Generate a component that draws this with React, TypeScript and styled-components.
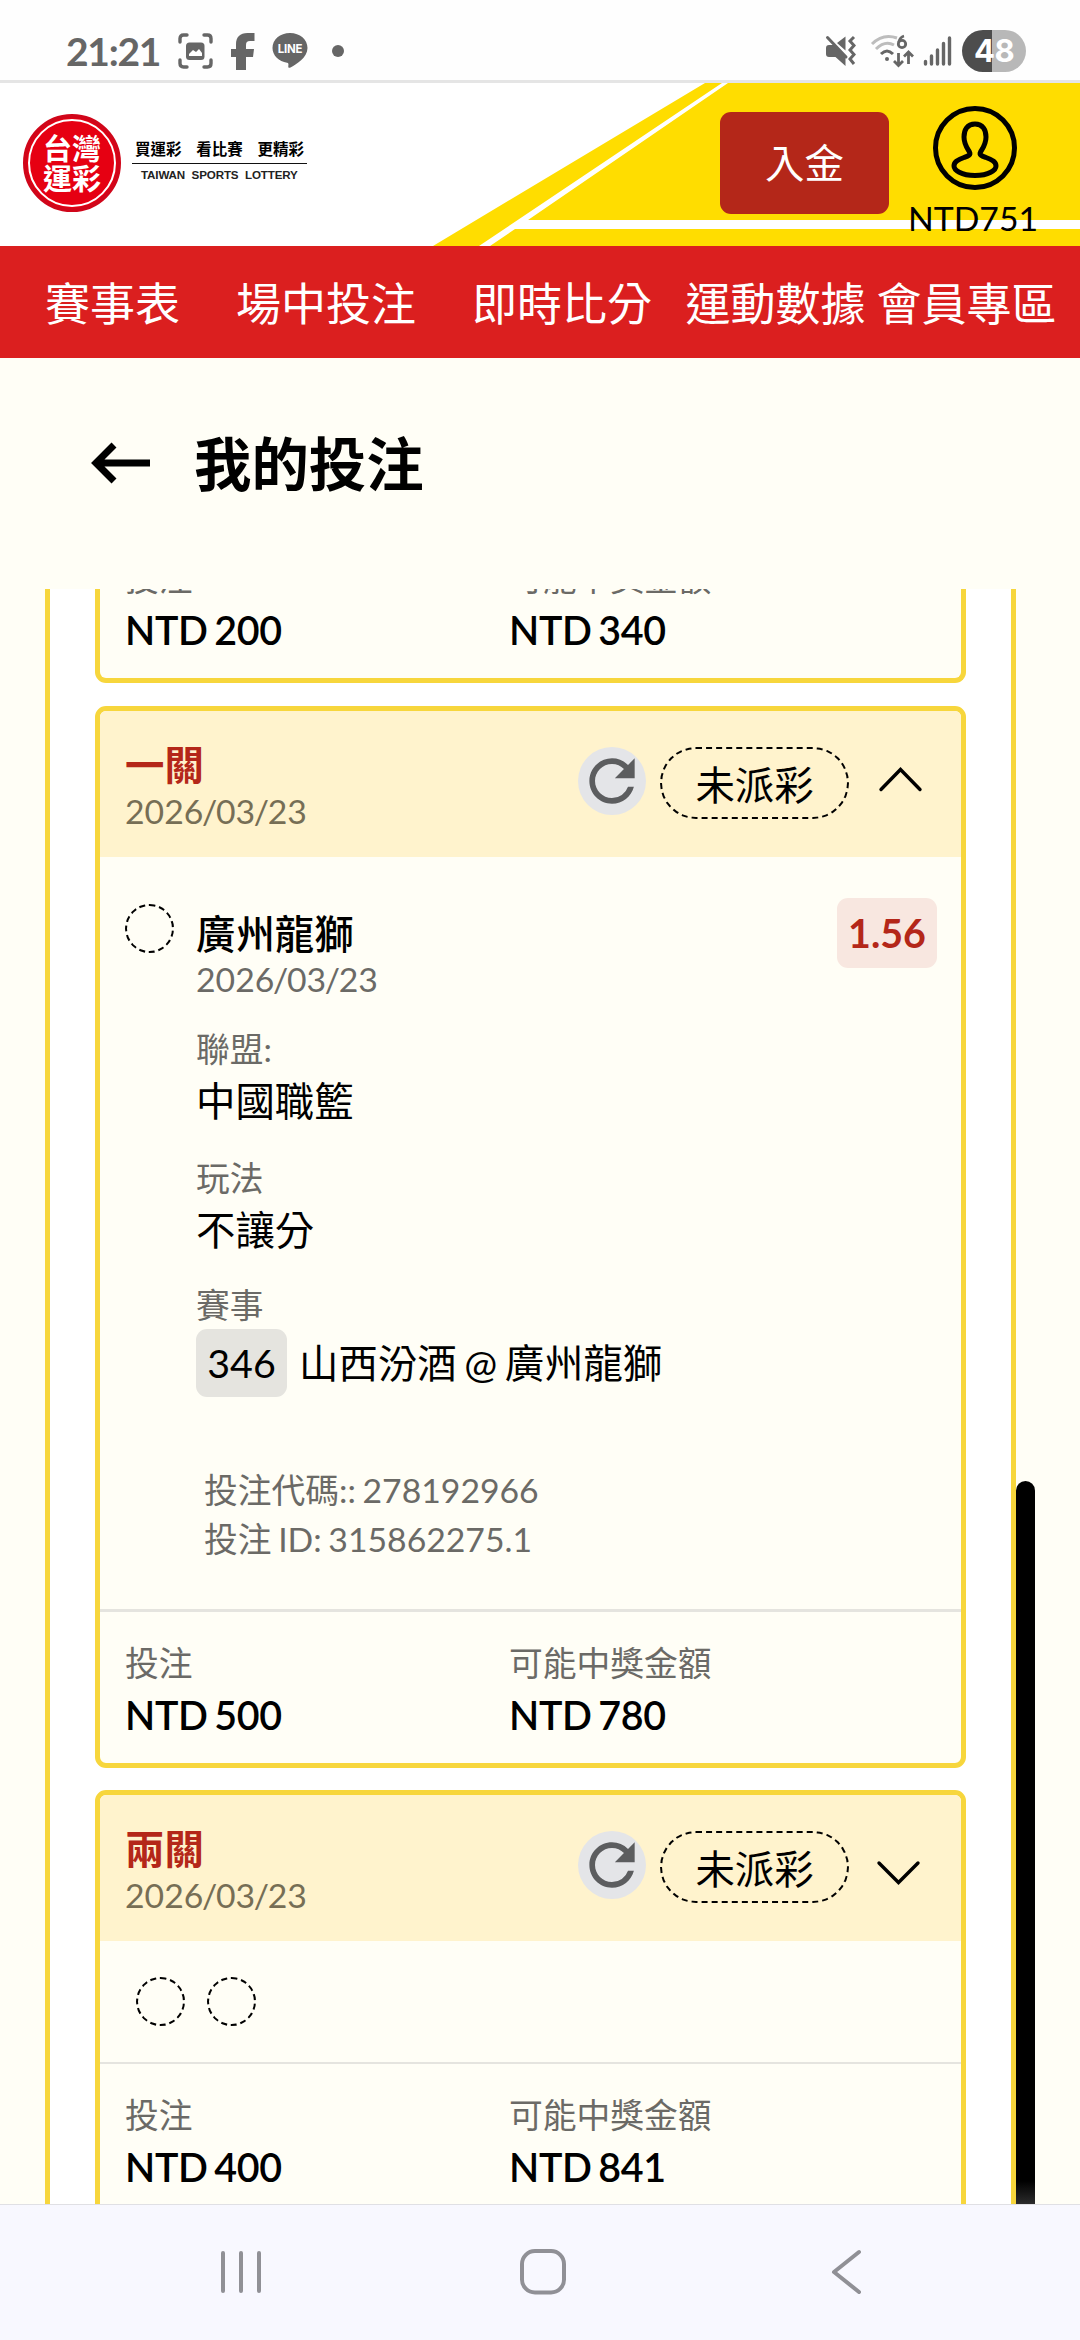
import React from "react";
import styled, { createGlobalStyle, css } from "styled-components";

const GlobalStyle = createGlobalStyle`
  * { box-sizing: border-box; }
  body {
    margin: 0;
    background: #fffef6;
    font-family: Lato, "Noto Sans CJK TC", sans-serif;
    color: #000;
  }
`;

const Screen = styled.div`
  width: 1080px;
  height: 2340px;
  overflow: hidden;
  display: flex;
  flex-direction: column;
  background: #fffef6;
`;

/* ---------- status bar ---------- */
const StatusBar = styled.div`
  height: 83px;
  flex: none;
  display: flex;
  justify-content: space-between;
  align-items: flex-start;
  padding: 22px 54px 0 66px;
  background: #fefefe;
  border-bottom: 3px solid #e5e5e5;
`;

const StatusGroup = styled.div<{ $gap: number }>`
  display: flex;
  align-items: center;
  height: 58px;
  gap: ${(p) => p.$gap}px;
`;

const Clock = styled.span`
  width: 112px;
  font-family: Lato, sans-serif;
  font-weight: 700;
  font-size: 39px;
  line-height: 57px;
  letter-spacing: -1.3px;
  color: #666;
  white-space: nowrap;
`;

const FacebookIcon = styled.svg`
  margin-left: 18px;
`;

const LineBubble = styled.span`
  display: grid;
  place-items: center;
  margin-left: 17px;
  > * { grid-area: 1 / 1; }
`;

const LineWord = styled.span`
  font: 700 11.5px/12px Inter, sans-serif;
  color: #fff;
  margin-top: -4px;
  letter-spacing: -0.3px;
`;

const Dot = styled.span`
  width: 12px;
  height: 12px;
  border-radius: 50%;
  background: #666;
  margin-left: 24px;
`;

const WifiIcon = styled.svg`
  margin-left: 5px;
`;

const Battery = styled.span`
  width: 64px;
  height: 42px;
  border-radius: 21px;
  margin-left: 1px;
  background: linear-gradient(90deg, #4d4d4d 30px, #b8b8b8 30px);
  color: #fff;
  font: 700 31px/42px Inter, sans-serif;
  letter-spacing: -0.5px;
  text-align: center;
`;

/* ---------- header ---------- */
const Header = styled.header`
  height: 163px;
  flex: none;
  display: grid;
  background: #fff;
  > * { grid-area: 1 / 1; }
`;

const HeaderContent = styled.div`
  z-index: 1;
  display: flex;
  align-items: flex-start;
`;

const Seal = styled.div`
  width: 98px;
  height: 98px;
  margin: 31px 0 0 23px;
  border-radius: 50%;
  background: #e60012;
  border: 4px solid #d0061a;
  padding: 1px;
`;

const SealRing = styled.div`
  width: 88px;
  height: 88px;
  border: 2px solid #fff;
  border-radius: 50%;
  display: flex;
  flex-direction: column;
  align-items: center;
  padding-top: 13px;
  color: #fff;
  font-weight: 700;
  font-size: 29px;
  line-height: 29.5px;
`;

const Tagline = styled.div`
  width: 175px;
  margin: 58px 0 0 11px;
  display: flex;
  flex-direction: column;
`;

const Slogan = styled.div`
  display: flex;
  justify-content: space-between;
  padding: 0 3px 0 3px;
  height: 23px;
  border-bottom: 1.5px solid #111;
  font-weight: 700;
  font-size: 15.5px;
  line-height: 16px;
`;

const SloganEn = styled.div`
  padding: 4px 0 0 9px;
  font: 700 11.6px/14px "Liberation Sans", Arial, sans-serif;
  word-spacing: 3.5px;
  letter-spacing: -0.14px;
  color: #222;
  white-space: nowrap;
`;

const Deposit = styled.button`
  width: 169px;
  height: 102px;
  margin: 29px 0 0 413px;
  padding: 0;
  border: 0;
  border-radius: 11px;
  background: #b42719;
  color: #fff;
  font: 400 39.4px/100px Lato, "Noto Sans CJK TC", sans-serif;
`;

const Account = styled.div`
  width: 150px;
  margin: 23px 0 0 9px;
  display: flex;
  flex-direction: column;
  align-items: center;
  font-size: 33.75px;
  line-height: 40px;
  gap: 8px;
  > svg { margin-left: 4px; }
`;

const Nav = styled.nav`
  height: 112px;
  flex: none;
  display: flex;
  background: #db1f1f;
  color: #fff;
  font-size: 45px;
  line-height: 117px;
  padding-left: 45px;
`;

const NavItem = styled.a<{ $gap?: number }>`
  margin-right: ${(p) => p.$gap ?? 0}px;
  white-space: nowrap;
`;

/* ---------- page title ---------- */
const TitleRow = styled.div`
  height: 231px;
  flex: none;
  display: flex;
  align-items: flex-start;
  padding: 83px 0 0 90px;
`;

const Title = styled.h1`
  margin: -17px 0 0 42px;
  font-size: 57.4px;
  line-height: 80px;
  font-weight: 700;
`;

/* ---------- bet list ---------- */
const Viewport = styled.main`
  height: 1615px;
  flex: none;
  overflow: hidden;
  display: flex;
  padding-left: 45px;
`;

const List = styled.section`
  width: 971px;
  height: 1800px;
  flex: none;
  display: flex;
  flex-direction: column;
  gap: 22.5px;
  padding: 0 45px;
  background: #fff;
  border: solid #f7d63c;
  border-width: 0 5px;
`;

const Track = styled.div`
  width: 19px;
  padding-top: 892px;
`;

const Thumb = styled.div`
  height: 723px;
  border-radius: 10px 10px 0 0;
  background: linear-gradient(#000 700px, #2c2c2c 723px);
`;

const Card = styled.article<{ $h: number; $open?: boolean }>`
  height: ${(p) => p.$h}px;
  flex: none;
  display: flex;
  flex-direction: column;
  overflow: hidden;
  background: #fffef6;
  border: 5px solid #f7d63c;
  border-radius: 11px;
  ${(p) => p.$open && css`
    border-top: 0;
    border-top-left-radius: 0;
    border-top-right-radius: 0;
    justify-content: flex-end;
  `}
`;

const CardHead = styled.div`
  height: 146px;
  flex: none;
  display: flex;
  background: #fff3cd;
  padding: 0 36px 0 25px;
`;

const HeadText = styled.div`
  flex: 1;
  padding-top: 29px;
`;

const Legs = styled.div`
  color: #b42719;
  font-weight: 700;
  font-size: 39.4px;
  line-height: 50px;
`;

const DateText = styled.div<{ $tone?: string }>`
  font-size: 33.75px;
  line-height: 43px;
  color: ${(p) => p.$tone ?? "#6b6a66"};
`;

const Slash = styled.span`
  margin: 0 -1.35px;
`;

const Refresh = styled.button`
  width: 68px;
  height: 68px;
  margin: 36px 14px 0 0;
  padding: 0;
  border: 0;
  border-radius: 50%;
  background: #e4e5e8;
  display: grid;
  place-items: center;
`;

const Pill = styled.span`
  width: 189px;
  height: 72px;
  margin: 36px 28px 0 0;
  border: 2px dashed #000;
  border-radius: 36px;
  font-size: 39.4px;
  line-height: 71px;
  text-align: center;
`;

const Toggle = styled.span<{ $up?: boolean }>`
  width: 48px;
  padding-top: ${(p) => (p.$up ? 53 : 63)}px;
  margin-left: ${(p) => (p.$up ? 0 : -2)}px;
  margin-right: ${(p) => (p.$up ? 0 : 2)}px;
`;

const Ring = styled.span`
  width: 49px;
  height: 49px;
  flex: none;
  border: 2px dashed #000;
  border-radius: 50%;
`;

const Body = styled.div`
  flex: 1;
  display: flex;
  padding: 0 24px 0 25px;
  > ${Ring} { margin-top: 47px; }
`;

const Detail = styled.div`
  flex: 1;
  display: flex;
  flex-direction: column;
  padding: 52px 0 0 22px;
`;

const Team = styled.div`
  font-weight: 500;
  font-size: 39.4px;
  line-height: 49px;
`;

const Label = styled.div<{ $mt?: number; $lh?: number }>`
  font-size: 33.75px;
  line-height: ${(p) => p.$lh ?? 48}px;
  margin-top: ${(p) => p.$mt ?? 0}px;
  color: #6b6a66;
  word-spacing: -2px;
`;

const Value = styled.div`
  font-size: 39.4px;
  line-height: 56px;
`;

const Match = styled.div`
  display: flex;
  align-items: center;
  gap: 12px;
  font-size: 39.4px;
  line-height: 68px;
  white-space: nowrap;
  word-spacing: -2.5px;
`;

const MatchNo = styled.span`
  width: 91px;
  height: 68px;
  border-radius: 11px;
  background: #e5e4df;
  text-align: center;
  line-height: 67px;
`;

const Codes = styled.div`
  margin: 69.5px 0 0 8px;
`;

const Odds = styled.span`
  width: 100px;
  height: 70px;
  margin-top: 41px;
  border-radius: 11px;
  background: #f8e7e0;
  color: #b42719;
  font-weight: 700;
  font-size: 39.4px;
  line-height: 69px;
  text-align: center;
`;

const Rings = styled.div`
  height: 121px;
  flex: none;
  display: flex;
  gap: 22px;
  padding: 36px 0 0 36px;
`;

const Totals = styled.div<{ $line: number }>`
  flex: none;
  height: 154px;
  display: grid;
  grid-template-columns: 384px 1fr;
  align-content: start;
  padding: 27px 0 0 25px;
  border-top: ${(p) => p.$line}px solid #e5e4df;
`;

const Money = styled.div`
  font-weight: 600;
  font-size: 39.4px;
  line-height: 50px;
  margin-top: 3px;
  letter-spacing: -0.3px;
  word-spacing: -3px;
`;

/* ---------- system navigation ---------- */
const SystemNav = styled.div`
  flex: 1;
  display: flex;
  align-items: flex-start;
  padding: 42px 0 0 218px;
  background: #f8f8ff;
  border-top: 1px solid #e0e0e4;
`;

const HomeSlot = styled.span`
  display: flex;
  margin: 0 263px 0 256px;
`;

const stake = "投注";
const payout = "可能中獎金額";

function BetDate({ tone }: { tone?: string }) {
  return <DateText $tone={tone}>2026<Slash>/</Slash>03<Slash>/</Slash>23</DateText>;
}

function BetTotals({ bet, win, line = 3 }: { bet: number; win: number; line?: number }) {
  return (
    <Totals $line={line}>
      <div><Label>{stake}</Label><Money>NTD {bet}</Money></div>
      <div><Label>{payout}</Label><Money>NTD {win}</Money></div>
    </Totals>
  );
}

function BetHead({ legs, open }: { legs: string; open?: boolean }) {
  return (
    <CardHead>
      <HeadText>
        <Legs>{legs}</Legs>
        <BetDate tone="#766e55" />
      </HeadText>
      <Refresh aria-label="refresh">
        <svg width="68" height="68" viewBox="0 0 24 24" fill="#5c5d5f">
          <path d="M17.65 6.35A7.958 7.958 0 0 0 12 4c-4.42 0-7.99 3.58-7.99 8s3.57 8 7.99 8c3.73 0 6.84-2.55 7.73-6h-2.08A5.99 5.99 0 0 1 12 18c-3.31 0-6-2.69-6-6s2.69-6 6-6c1.66 0 3.14.69 4.22 1.78L13 11h7V4l-2.35 2.35z" />
        </svg>
      </Refresh>
      <Pill>未派彩</Pill>
      <Toggle $up={open}>
        <svg width="48" height="30" viewBox="0 0 48 30" fill="none" stroke="#000" strokeWidth="3.4" strokeLinecap="round">
          {open ? <path d="M4 25.5L23.5 5.500L43 25.5" /> : <path d="M4 5L23.500 24.500L43 5" />}
        </svg>
      </Toggle>
    </CardHead>
  );
}

export default function App() {
  return (
    <Screen>
      <GlobalStyle />
      <StatusBar>
        <StatusGroup $gap={0}>
          <Clock>21:21</Clock>
          <svg width="35" height="36" viewBox="0 0 35 36" fill="none" stroke="#666" strokeWidth="3.4" strokeLinecap="round">
            <path d="M2 9V5.500Q2 2 5.500 2H9M26 2H29.500Q33 2 33 5.500V9M33 27V30.500Q33 34 29.500 34H26M9 34H5.500Q2 34 2 30.500V27" />
            <rect x="8" y="9.500" width="18.500" height="17.500" rx="3.500" fill="#666" stroke="none" />
            <path d="M11 23v-2l4-4 3 2 3-3 3 4v3z" fill="#fff" stroke="none" />
          </svg>
          <FacebookIcon width="24" height="37" viewBox="0 0 24 37" fill="#666">
            <path d="M5 37V24H0V16H5V11.500C5 4 9 0 16.500 0H23.500V8H19C16 8 15 9.300 15 12V16H23L22 24H15V37Z" />
          </FacebookIcon>
          <LineBubble>
            <svg width="36" height="36" viewBox="0 0 36 36" fill="#666">
              <path d="M18 0C8 0 .5 6.500 .5 15c0 7.500 6.500 13.500 14.500 14.700 1.600.3 1.600 1.200 1.300 3.300-.2 1.800.5 2.300 2.200 1.400C24 31.500 35.500 25 35.500 15 35.500 6.500 28 0 18 0z" />
            </svg>
            <LineWord>LINE</LineWord>
          </LineBubble>
          <Dot />
        </StatusGroup>
        <StatusGroup $gap={9}>
          <svg width="31" height="32" viewBox="0 0 31 32" fill="#666">
            <path d="M1 13q0-3 3-3h5L20.500 21.500V31L10.500 22H4q-3 0-3-3zM12 8l8.500-6.500V15.500z" />
            <path d="M2.500 2.500L21 22" stroke="#666" strokeWidth="3" strokeLinecap="round" />
            <path d="M29 2l-4 4 4 4.500-4 4.500 4 4.500-4 4.500 4 5" fill="none" stroke="#666" strokeWidth="3" />
          </svg>
          <WifiIcon width="44" height="34" viewBox="0 0 44 34" fill="none">
            <path d="M2 10Q13-1 27 4" stroke="#bdbdbd" strokeWidth="3" />
            <path d="M6 15Q15 6 24 11" stroke="#bdbdbd" strokeWidth="3" />
            <path d="M11 20Q17 14 23 20" stroke="#666" strokeWidth="3" />
            <circle cx="17" cy="25" r="2" fill="#666" />
            <circle cx="32" cy="10" r="3.700" stroke="#666" strokeWidth="2.800" />
            <path d="M28.500 8.500Q30 3 34 2M28.500 19v12M24 27l4.500 4.500L33 27M38.500 30V18M34 22.500l4.500-4.500 4.500 4.500" stroke="#666" strokeWidth="2.800" />
          </WifiIcon>
          <svg width="29" height="32" viewBox="0 0 29 32" stroke="#666" strokeWidth="3.4" strokeLinecap="round">
            <path d="M2.500 26.500V29M8.500 21V29M14.500 15V29M20.500 8.500V29M26.500 3V29" />
          </svg>
          <Battery>48</Battery>
        </StatusGroup>
      </StatusBar>

      <Header>
        <svg width="1080" height="163" viewBox="0 83 1080 163" fill="#ffdd00">
          <path d="M705 83H722L479 246H433ZM728 83H1080V220H528ZM515 229H1080V246H490Z" />
        </svg>
        <HeaderContent>
          <Seal>
            <SealRing><span>台灣</span><span>運彩</span></SealRing>
          </Seal>
          <Tagline>
            <Slogan><span>買運彩</span><span>看比賽</span><span>更精彩</span></Slogan>
            <SloganEn>TAIWAN SPORTS LOTTERY</SloganEn>
          </Tagline>
          <Deposit>入金</Deposit>
          <Account>
            <svg width="84" height="84" viewBox="0 0 84 84" fill="none" stroke="#000" strokeWidth="5">
              <circle cx="42" cy="42" r="39.500" />
              <path d="M42 18C34 18 31 24 31 31C31 38 33.500 41 36.500 46C38 49 35 50 31 51.500C24 54 21 56 21 60C21 64 28 69.500 42 69.500C56 69.500 63 64 63 60C63 56 60 54 53 51.500C49 50 46 49 47.500 46C50.500 41 53 38 53 31C53 24 50 18 42 18Z" strokeLinejoin="round" />
            </svg>
            <span>NTD751</span>
          </Account>
        </HeaderContent>
      </Header>

      <Nav>
        <NavItem $gap={56}>賽事表</NavItem>
        <NavItem $gap={56}>場中投注</NavItem>
        <NavItem $gap={33.5}>即時比分</NavItem>
        <NavItem $gap={11}>運動數據</NavItem>
        <NavItem>會員專區</NavItem>
      </Nav>

      <TitleRow>
        <svg width="62" height="44" viewBox="0 0 62 44" fill="none" stroke="#000" strokeWidth="7">
          <path d="M60 22H6M24 4L6 22L24 40" />
        </svg>
        <Title>我的投注</Title>
      </TitleRow>

      <Viewport>
        <List>
          <Card $h={94} $open>
            <BetTotals bet={200} win={340} />
          </Card>

          <Card $h={1062}>
            <BetHead legs="一關" open />
            <Body>
              <Ring />
              <Detail>
                <Team>廣州龍獅</Team>
                <BetDate />
                <Label $mt={24}>聯盟:</Label>
                <Value>中國職籃</Value>
                <Label $mt={25}>玩法</Label>
                <Value>不讓分</Value>
                <Label $mt={24} $lh={47}>賽事</Label>
                <Match><MatchNo>346</MatchNo><span>山西汾酒 @ 廣州龍獅</span></Match>
                <Codes>
                  <Label $lh={48.7}>投注代碼:: 278192966</Label>
                  <Label $lh={48.7}>投注 ID: 315862275.1</Label>
                </Codes>
              </Detail>
              <Odds>1.56</Odds>
            </Body>
            <BetTotals bet={500} win={780} />
          </Card>

          <Card $h={440}>
            <BetHead legs="兩關" />
            <Rings><Ring /><Ring /></Rings>
            <BetTotals bet={400} win={841} line={2} />
          </Card>
        </List>
        <Track><Thumb /></Track>
      </Viewport>

      <SystemNav>
        <svg width="46" height="50" viewBox="0 0 46 50" stroke="#909096" strokeWidth="4" strokeLinecap="round">
          <path d="M5 6V44M23 6V44M41 6V44" />
        </svg>
        <HomeSlot>
          <svg width="46" height="50" viewBox="0 0 46 50" fill="none" stroke="#909096" strokeWidth="4">
            <rect x="2" y="4" width="42" height="41.500" rx="13" />
          </svg>
        </HomeSlot>
        <svg width="36" height="50" viewBox="0 0 36 50" fill="none" stroke="#909096" strokeWidth="4" strokeLinecap="round" strokeLinejoin="round">
          <path d="M30 5L5 25L30 45" />
        </svg>
      </SystemNav>
    </Screen>
  );
}
